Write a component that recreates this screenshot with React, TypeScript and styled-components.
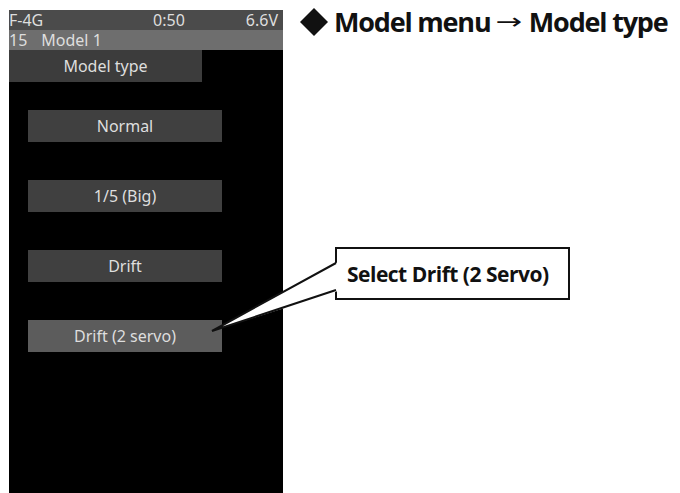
import { FC } from 'react';
import styled, { createGlobalStyle } from 'styled-components';

const GlobalStyle = createGlobalStyle`
	html, body {
		margin: 0;
		padding: 0;
		background: #fff;
	}
	body {
		width: 680px;
		height: 493px;
		overflow: hidden;
	}
`;

const Page = styled.div`
	position: relative;
	display: flex;
	align-items: flex-start;
	width: 680px;
	height: 493px;
`;

const Screen = styled.div`
	display: flex;
	flex-direction: column;
	width: 274px;
	height: 483px;
	margin: 10px 0 0 9px;
	background: #000;
	font-family: 'Noto Sans', 'Open Sans', sans-serif;
	font-size: 16px;
	color: #dedede;
`;

const StatusBar = styled.div`
	display: flex;
	align-items: center;
	height: 20px;
	padding-right: 5px;
	background: #4b4b4b;
	line-height: 20px;

	.time {
		margin-left: auto;
		margin-right: 61px;
	}
`;

const ModelRow = styled.div`
	height: 20px;
	background: #6e6e6e;
	line-height: 20px;

	.name {
		margin-left: 14px;
	}
`;

const TitleTab = styled.div`
	width: 193px;
	height: 32px;
	background: #3c3c3c;
	line-height: 32px;
	text-align: center;
`;

const ButtonList = styled.div`
	display: flex;
	flex-direction: column;
	gap: 38px;
	padding: 28px 0 0 19px;
`;

const TypeButton = styled.div<{ $selected?: boolean }>`
	width: 194px;
	height: 32px;
	background: ${({ $selected }) => ($selected ? '#5c5c5c' : '#404040')};
	line-height: 32px;
	text-align: center;
`;

const Heading = styled.h1`
	display: flex;
	align-items: center;
	margin: 3px 0 0 17px;
	font-family: 'Open Sans', sans-serif;
	font-weight: 700;
	font-size: 27px;
	line-height: 37px;
	color: #111;
	letter-spacing: -1.2px;
	white-space: nowrap;

	svg {
		margin-right: 6px;
	}

	.arrow {
		display: inline-block;
		font-family: 'DejaVu Sans', sans-serif;
		font-weight: 400;
		font-size: 22px;
		margin: 0 10px;
		letter-spacing: 0;
		transform: scaleX(1.45);
	}
`;

const Callout = styled.div`
	position: absolute;
	left: 335px;
	top: 247px;
	width: 221px;
	height: 49px;
	padding-left: 10px;
	border: 2px solid #111;
	display: flex;
	align-items: center;
	font-family: 'Open Sans', sans-serif;
	font-weight: 700;
	font-size: 21px;
	color: #111;
	letter-spacing: -0.5px;
	background: #fff;
`;

const Pointer = styled.svg`
	position: absolute;
	left: 0;
	top: 0;
	pointer-events: none;
`;

const types = ['Normal', '1/5 (Big)', 'Drift', 'Drift (2 servo)'];

const App: FC = () => {
	return (
		<Page>
			<GlobalStyle />
			<Screen>
				<StatusBar>
					<span>F-4G</span>
					<span className="time">0:50</span>
					<span>6.6V</span>
				</StatusBar>
				<ModelRow>
					15<span className="name">Model 1</span>
				</ModelRow>
				<TitleTab>Model type</TitleTab>
				<ButtonList>
					{types.map((t, i) => (
						<TypeButton key={t} $selected={i === 3}>
							{t}
						</TypeButton>
					))}
				</ButtonList>
			</Screen>
			<Heading>
				<svg width="28" height="28" viewBox="0 0 28 28">
					<path d="M14 0 L28 14 L14 28 L0 14 Z" fill="#111" />
				</svg>
				<span>Model menu</span>
				<span className="arrow">→</span>
				<span>Model type</span>
			</Heading>
			<Callout>Select Drift (2 Servo)</Callout>
			<Pointer width="680" height="493" viewBox="0 0 680 493">
				<polygon points="338,262 212,331 338,291" fill="#fff" />
				<polyline points="336,263 212,331 336,290" fill="none" stroke="#111" strokeWidth="2" />
			</Pointer>
		</Page>
	);
};

export default App;
